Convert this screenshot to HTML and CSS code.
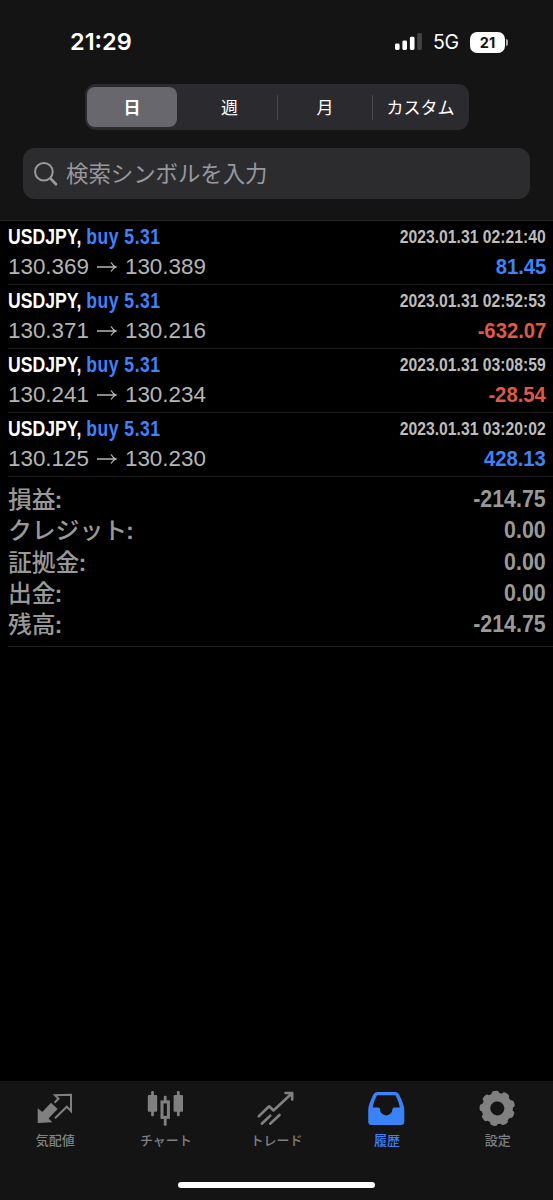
FILE: index.html
```html
<!DOCTYPE html>
<html lang="ja">
<head>
  <meta charset="utf-8">
  <title>履歴</title>
  <link rel="stylesheet" href="styles.css">
</head>
<body>
  <div class="app">
    <header class="header">
      <div class="status">
        <span class="time">21:29</span>
        <div class="status-right">
          <svg class="signal" width="29" height="20" viewBox="0 0 29 20">
            <rect x="2" y="11.5" width="4.6" height="6.5" rx="1.4" fill="#fff"/>
            <rect x="9.4" y="8.5" width="4.6" height="9.5" rx="1.4" fill="#fff"/>
            <rect x="16.9" y="4.8" width="4.6" height="13.2" rx="1.4" fill="#fff"/>
            <rect x="24.3" y="1" width="4.6" height="17" rx="1.4" fill="#434343"/>
          </svg>
          <span class="network">5G</span>
          <span class="battery">21</span>
          <span class="battery-tip"></span>
        </div>
      </div>
      <div class="segments">
        <button class="segment active">日</button>
        <button class="segment">週</button>
        <button class="segment">月</button>
        <button class="segment">カスタム</button>
      </div>
      <div class="search">
        <svg width="24" height="26" viewBox="0 0 24 26" fill="none" stroke="#98989e" stroke-linecap="round">
          <circle cx="9.9" cy="10.7" r="8.8" stroke-width="2"/>
          <path d="M16.4 17.4l5.6 5.9" stroke-width="2.7"/>
        </svg>
        <span>検索シンボルを入力</span>
      </div>
    </header>

    <main class="history">
      <div class="deal">
        <div class="line"><span class="symbol">USDJPY, <b>buy 5.31</b></span><span class="date">2023.01.31 02:21:40</span></div>
        <div class="line"><span class="price">130.369<svg class="arrow" viewBox="0 0 20 12"><path d="M0 6h19M14 1.5q2 3.5 5.2 4.5q-3.2 1-5.2 4.5"/></svg>130.389</span><span class="profit">81.45</span></div>
      </div>
      <div class="deal">
        <div class="line"><span class="symbol">USDJPY, <b>buy 5.31</b></span><span class="date">2023.01.31 02:52:53</span></div>
        <div class="line"><span class="price">130.371<svg class="arrow" viewBox="0 0 20 12"><path d="M0 6h19M14 1.5q2 3.5 5.2 4.5q-3.2 1-5.2 4.5"/></svg>130.216</span><span class="profit loss">-632.07</span></div>
      </div>
      <div class="deal">
        <div class="line"><span class="symbol">USDJPY, <b>buy 5.31</b></span><span class="date">2023.01.31 03:08:59</span></div>
        <div class="line"><span class="price">130.241<svg class="arrow" viewBox="0 0 20 12"><path d="M0 6h19M14 1.5q2 3.5 5.2 4.5q-3.2 1-5.2 4.5"/></svg>130.234</span><span class="profit loss">-28.54</span></div>
      </div>
      <div class="deal">
        <div class="line"><span class="symbol">USDJPY, <b>buy 5.31</b></span><span class="date">2023.01.31 03:20:02</span></div>
        <div class="line"><span class="price">130.125<svg class="arrow" viewBox="0 0 20 12"><path d="M0 6h19M14 1.5q2 3.5 5.2 4.5q-3.2 1-5.2 4.5"/></svg>130.230</span><span class="profit">428.13</span></div>
      </div>
      <div class="summary">
        <div class="total"><span class="label">損益<b>:</b></span><span class="amount">-214.75</span></div>
        <div class="total"><span class="label">クレジット<b>:</b></span><span class="amount">0.00</span></div>
        <div class="total"><span class="label">証拠金<b>:</b></span><span class="amount">0.00</span></div>
        <div class="total"><span class="label">出金<b>:</b></span><span class="amount">0.00</span></div>
        <div class="total"><span class="label">残高<b>:</b></span><span class="amount">-214.75</span></div>
      </div>
    </main>

    <footer class="footer">
      <nav class="tabs">
        <a class="tab">
          <svg width="40" height="40" viewBox="0 0 40 40">
            <path d="M2.7 35V20.3l4.6 3.8L16 14.7l6.7 6.3-9.2 9.4 3.8 3.8z" fill="#808080"/>
            <path d="M19.5 14.7l4-4L20 7.2l16-.4V23l-4.2-4.3L20 30.3" fill="none" stroke="#808080" stroke-width="2"/>
          </svg>
          <span>気配値</span>
        </a>
        <a class="tab">
          <svg width="40" height="40" viewBox="0 0 40 40">
            <g fill="#808080">
              <rect x="1.8" y="7" width="9.4" height="16.7" rx="1"/>
              <rect x="5.1" y="3" width="2.8" height="25.3" rx="1"/>
              <rect x="27.6" y="7" width="9.4" height="16.7" rx="1"/>
              <rect x="30.9" y="3" width="2.8" height="25.3" rx="1"/>
              <rect x="17.8" y="7.7" width="2.8" height="6" rx="1"/>
              <rect x="17.8" y="30" width="2.8" height="7.7" rx="1"/>
            </g>
            <rect x="16" y="13.9" width="6.4" height="15.5" fill="none" stroke="#808080" stroke-width="3"/>
          </svg>
          <span>チャート</span>
        </a>
        <a class="tab">
          <svg width="40" height="40" viewBox="0 0 40 40" fill="none" stroke="#808080" stroke-width="2.6" stroke-linecap="round" stroke-linejoin="round">
            <path d="M2.8 28.3L13.2 18.3l4.3 4.2L36 5.2M29.5 5h6.7v6.5M5.8 35.7l8.4-8M14.2 35.7l9.3-8.7"/>
          </svg>
          <span>トレード</span>
        </a>
        <a class="tab active">
          <svg width="40" height="40" viewBox="0 0 40 40">
            <path d="M10 4h18.5q2.5 0 3.6 2.6Q37.3 17 37.3 22v11.500q0 3.500-3.500 3.500H4.700q-3.500 0-3.500-3.500V22q0-5 5.200-15.400Q7.500 4 10 4zM10 7.200Q6 15 5.800 19.500h5.500q1.500 0 1.700 1.700a6.200 6.200 0 0 0 12.400 0q.2-1.700 1.700-1.700h5.600Q32.500 15 28.500 7.200z" fill="#3b82f6" fill-rule="evenodd"/>
          </svg>
          <span>履歴</span>
        </a>
        <a class="tab">
          <svg width="40" height="40" viewBox="0 0 40 40">
            <g fill="none" stroke="#808080" transform="rotate(-102 19.3 20.4)">
              <circle cx="19.3" cy="20.4" r="11.3" stroke-width="8.6"/>
              <circle cx="19.3" cy="20.4" r="15.2" stroke-width="5" stroke-linecap="round" pathLength="90" stroke-dasharray="2.4 7.6"/>
            </g>
          </svg>
          <span>設定</span>
        </a>
      </nav>
      <div class="home-bar"></div>
    </footer>
  </div>
</body>
</html>
```
FILE: styles.css
```css
* { box-sizing: border-box; }
body { margin: 0; background: #000; color: #fff; font-family: "Liberation Sans", "Noto Sans CJK JP", sans-serif; }
.app { display: flex; flex-direction: column; height: 1200px; }

.header { height: 221px; background: #141414; border-bottom: 1px solid #262626; }
.status { display: flex; justify-content: space-between; align-items: center; height: 84px; padding: 0 45px 0 70px; }
.time { font: 600 23.5px/28px Inter, sans-serif; }
.status-right { display: flex; align-items: center; }
.signal { margin-right: 11px; }
.network { width: 37px; font: 400 19.5px/24px Inter, sans-serif; letter-spacing: -0.3px; }
.battery { width: 35px; height: 21px; border-radius: 7px; background: #fff; color: #141414; font: 700 14.5px/21px Inter, sans-serif; text-align: center; }
.battery-tip { width: 2px; height: 7px; margin-left: 1px; border-radius: 0 3px 3px 0; background: #aaa; }

.segments { display: grid; grid-template-columns: repeat(4, 1fr); width: 384px; height: 46px; margin-left: 85px; padding: 2px; border-radius: 11px; background: #2b2a2f; }
.segment { border: 0; padding: 0 0 2px; background: none; color: #fff; font: 400 17px/23px "Noto Sans CJK JP", sans-serif; height: 25px; align-self: center; }
.segment + .segment + .segment { border-left: 1px solid #47474c; }
.segment:last-child { padding-left: 1px; }
.segment.active { height: 40px; width: 90px; border-radius: 8px; background: #68676e; font-weight: 700; }
.search { display: flex; align-items: center; gap: 8px; width: 507px; height: 51px; margin: 18px 0 0 23px; padding-left: 11px; border-radius: 12px; background: #2c2c2e; color: #98989e; font: 400 22.4px/32px "Noto Sans CJK JP", sans-serif; }
.search span { padding-bottom: 3px; }

.history { flex: 1; }
.deal { height: 64px; margin-left: 8px; padding: 1px 7px 0 0; border-bottom: 1px solid #1c1c1c; }
.line { display: flex; justify-content: space-between; align-items: center; height: 30px; white-space: nowrap; }

/* condensed bold */
.symbol, .date, .profit, .amount { font-weight: 700; transform-origin: right; }
.symbol { font-size: 22px; transform: scaleX(0.8); transform-origin: left; }
.symbol b { color: #3f83f8; letter-spacing: 0.6px; }
.date { font-size: 18.5px; color: #bdbdbd; transform: scaleX(0.85); }
.price { display: flex; align-items: center; font-size: 22.4px; color: #b5b5b5; }
.arrow { width: 20px; height: 12px; margin: 0 8px; fill: none; stroke: #b5b5b5; stroke-width: 1.3; }
.profit { font-size: 22.5px; color: #3f83f8; transform: scaleX(0.9); }
.profit.loss { color: #df5945; }
.summary { height: 170px; margin-left: 8px; padding: 7px 7px 0 0; border-bottom: 1px solid #1c1c1c; color: #999; }
.total { display: flex; justify-content: space-between; align-items: center; height: 31.3px; }
.label { font-size: 23.8px; font-weight: 500; line-height: 31px; }
.label b { margin-left: -1px; }
.amount { font-size: 23.5px; transform: scaleX(0.91); }

.footer { height: 119px; background: #141414; }
.tabs { display: grid; grid-template-columns: repeat(5, 1fr); height: 100px; padding-top: 7px; }
.tab { display: flex; flex-direction: column; align-items: center; color: #808080; font: 500 13px/20px "Noto Sans CJK JP", sans-serif; }
.tab span { margin-top: 2px; }
.tab.active { color: #3b82f6; }
.home-bar { width: 197px; height: 6px; margin: 1px auto 0; border-radius: 3px; background: #fff; }
```
